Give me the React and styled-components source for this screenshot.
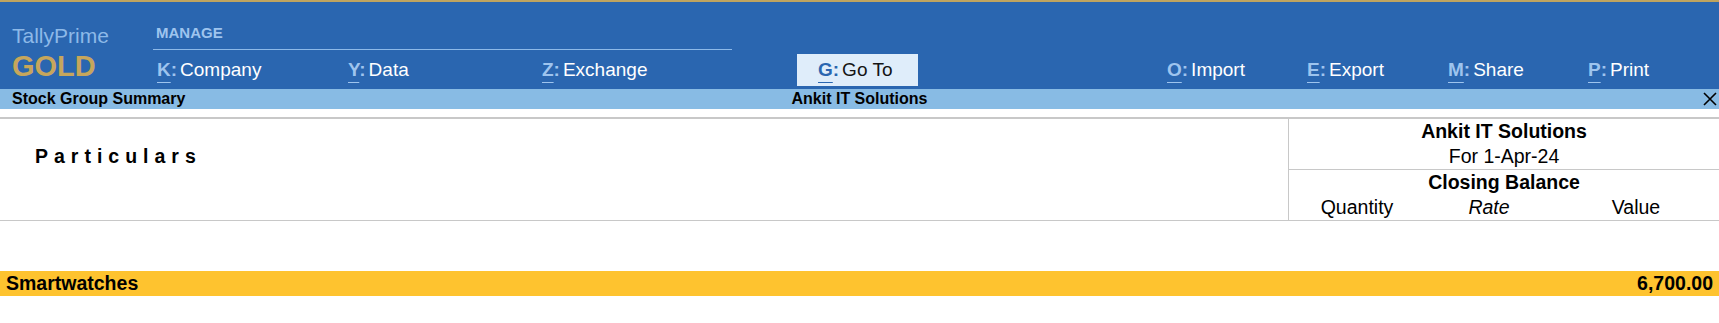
import React from "react";
import styled, { createGlobalStyle } from "styled-components";

const GlobalStyle = createGlobalStyle`
  html, body { margin: 0; padding: 0; background: #ffffff; }
  body { font-family: "Liberation Sans", Arial, sans-serif; color: #000; }
  * { box-sizing: border-box; }
`;

const Page = styled.div`
  width: 1719px;
  min-height: 323px;
  background: #ffffff;
`;

const GoldLine = styled.div`
  height: 2px;
  background: #bfa45f;
`;

const Header = styled.header`
  height: 87px;
  background: #2a66b0;
  display: flex;
`;

const Brand = styled.div`
  width: 153px;
  padding: 22px 0 0 12px;
  display: flex;
  flex-direction: column;
  gap: 2px;
`;

const BrandName = styled.div`
  font-size: 21px;
  line-height: 24px;
  color: #8db9e8;
`;

const BrandEdition = styled.div`
  font-size: 29px;
  line-height: 32px;
  font-weight: 700;
  color: #c6a65c;
`;

const Nav = styled.nav`
  flex: 1;
  display: flex;
  flex-direction: column;
`;

const ManageRow = styled.div`
  width: 579px;
  height: 48px;
  padding: 22px 0 0 3px;
  border-bottom: 1px solid #8db9e8;
  font-size: 15px;
  line-height: 18px;
  font-weight: 700;
  color: #9ec4ee;
`;

const Items = styled.div`
  flex: 1;
  display: flex;
  align-items: center;
`;

const Item = styled.div`
  width: ${(p) => p.$w}px;
  height: 32px;
  padding-left: ${(p) => p.$pad ?? 4}px;
  display: flex;
  align-items: baseline;
  font-size: 19px;
  line-height: 32px;
  color: ${(p) => (p.$active ? "#141414" : "#ffffff")};
  background: ${(p) => (p.$active ? "#dfedfa" : "transparent")};
`;

const Key = styled.span`
  font-weight: 700;
  color: ${(p) => (p.$active ? "#2a66b0" : "#9ec4ee")};
  margin-right: 3px;

  u {
    text-decoration: underline;
    text-decoration-thickness: 1px;
    text-underline-offset: 6px;
  }
`;

const Spacer = styled.div`
  width: ${(p) => p.$w}px;
`;

const TitleBar = styled.div`
  height: 20px;
  background: #88bbe4;
  display: grid;
  grid-template-columns: 1fr auto 1fr;
  align-items: center;
  font-size: 16px;
  line-height: 20px;
  font-weight: 700;
`;

const TitleLeft = styled.div`
  padding-left: 12px;
`;

const TitleCenter = styled.div``;

const CloseBox = styled.div`
  display: flex;
  justify-content: flex-end;
  padding-right: 2px;
  svg { display: block; }
`;

const TableHead = styled.div`
  margin-top: 8px;
  border-top: 2px solid #c8c8c8;
  border-bottom: 1px solid #c8c8c8;
  display: grid;
  grid-template-columns: 1288px 1fr;
`;

const ParticularsCell = styled.div`
  padding: 25px 0 0 35px;
  font-size: 19.5px;
  line-height: 25px;
  font-weight: 700;
  letter-spacing: 6px;
`;

const PeriodCell = styled.div`
  border-left: 1px solid #c8c8c8;
  font-size: 19.5px;
  line-height: 25px;
  text-align: center;
`;

const PeriodTop = styled.div`
  border-bottom: 1px solid #c8c8c8;
`;

const HeadLine = styled.div`
  font-weight: ${(p) => (p.$bold ? 700 : 400)};
`;

const SubCols = styled.div`
  display: grid;
  grid-template-columns: 136px 128px 1fr;
`;

const SubCol = styled.div`
  font-style: ${(p) => (p.$italic ? "italic" : "normal")};
`;

const Body = styled.div`
  padding-top: 50px;
`;

const GroupRow = styled.div`
  height: 25px;
  background: #fec32f;
  display: flex;
  justify-content: space-between;
  align-items: center;
  padding: 0 6px;
  font-size: 19.5px;
  line-height: 25px;
  font-weight: 700;
`;

const leftItems = [
  { k: "K", label: "Company", w: 191 },
  { k: "Y", label: "Data", w: 194 },
  { k: "Z", label: "Exchange", w: 259 },
];

const rightItems = [
  { k: "O", label: "Import", w: 140 },
  { k: "E", label: "Export", w: 141 },
  { k: "M", label: "Share", w: 140 },
  { k: "P", label: "Print", w: 130 },
];

function MenuItem({ k, label, w, active, pad }) {
  return (
    <Item $w={w} $active={active} $pad={pad}>
      <Key $active={active}>
        <u>{k}</u>:
      </Key>
      <span>{label}</span>
    </Item>
  );
}

export default function App() {
  return (
    <Page>
      <GlobalStyle />
      <GoldLine />
      <Header>
        <Brand>
          <BrandName>TallyPrime</BrandName>
          <BrandEdition>GOLD</BrandEdition>
        </Brand>
        <Nav>
          <ManageRow>MANAGE</ManageRow>
          <Items>
            {leftItems.map((it) => (
              <MenuItem key={it.k} {...it} />
            ))}
            <MenuItem k="G" label="Go To" w={121} pad={21} active />
            <Spacer $w={245} />
            {rightItems.map((it) => (
              <MenuItem key={it.k} {...it} />
            ))}
          </Items>
        </Nav>
      </Header>
      <TitleBar>
        <TitleLeft>Stock Group Summary</TitleLeft>
        <TitleCenter>Ankit IT Solutions</TitleCenter>
        <CloseBox>
          <svg width="14" height="14" viewBox="0 0 14 14">
            <path d="M1 1 L13 13 M13 1 L1 13" stroke="#000" strokeWidth="1.6" />
          </svg>
        </CloseBox>
      </TitleBar>
      <TableHead>
        <ParticularsCell>Particulars</ParticularsCell>
        <PeriodCell>
          <PeriodTop>
            <HeadLine $bold>Ankit IT Solutions</HeadLine>
            <HeadLine>For 1-Apr-24</HeadLine>
          </PeriodTop>
          <HeadLine $bold>Closing Balance</HeadLine>
          <SubCols>
            <SubCol>Quantity</SubCol>
            <SubCol $italic>Rate</SubCol>
            <SubCol>Value</SubCol>
          </SubCols>
        </PeriodCell>
      </TableHead>
      <Body>
        <GroupRow>
          <span>Smartwatches</span>
          <span>6,700.00</span>
        </GroupRow>
      </Body>
    </Page>
  );
}
